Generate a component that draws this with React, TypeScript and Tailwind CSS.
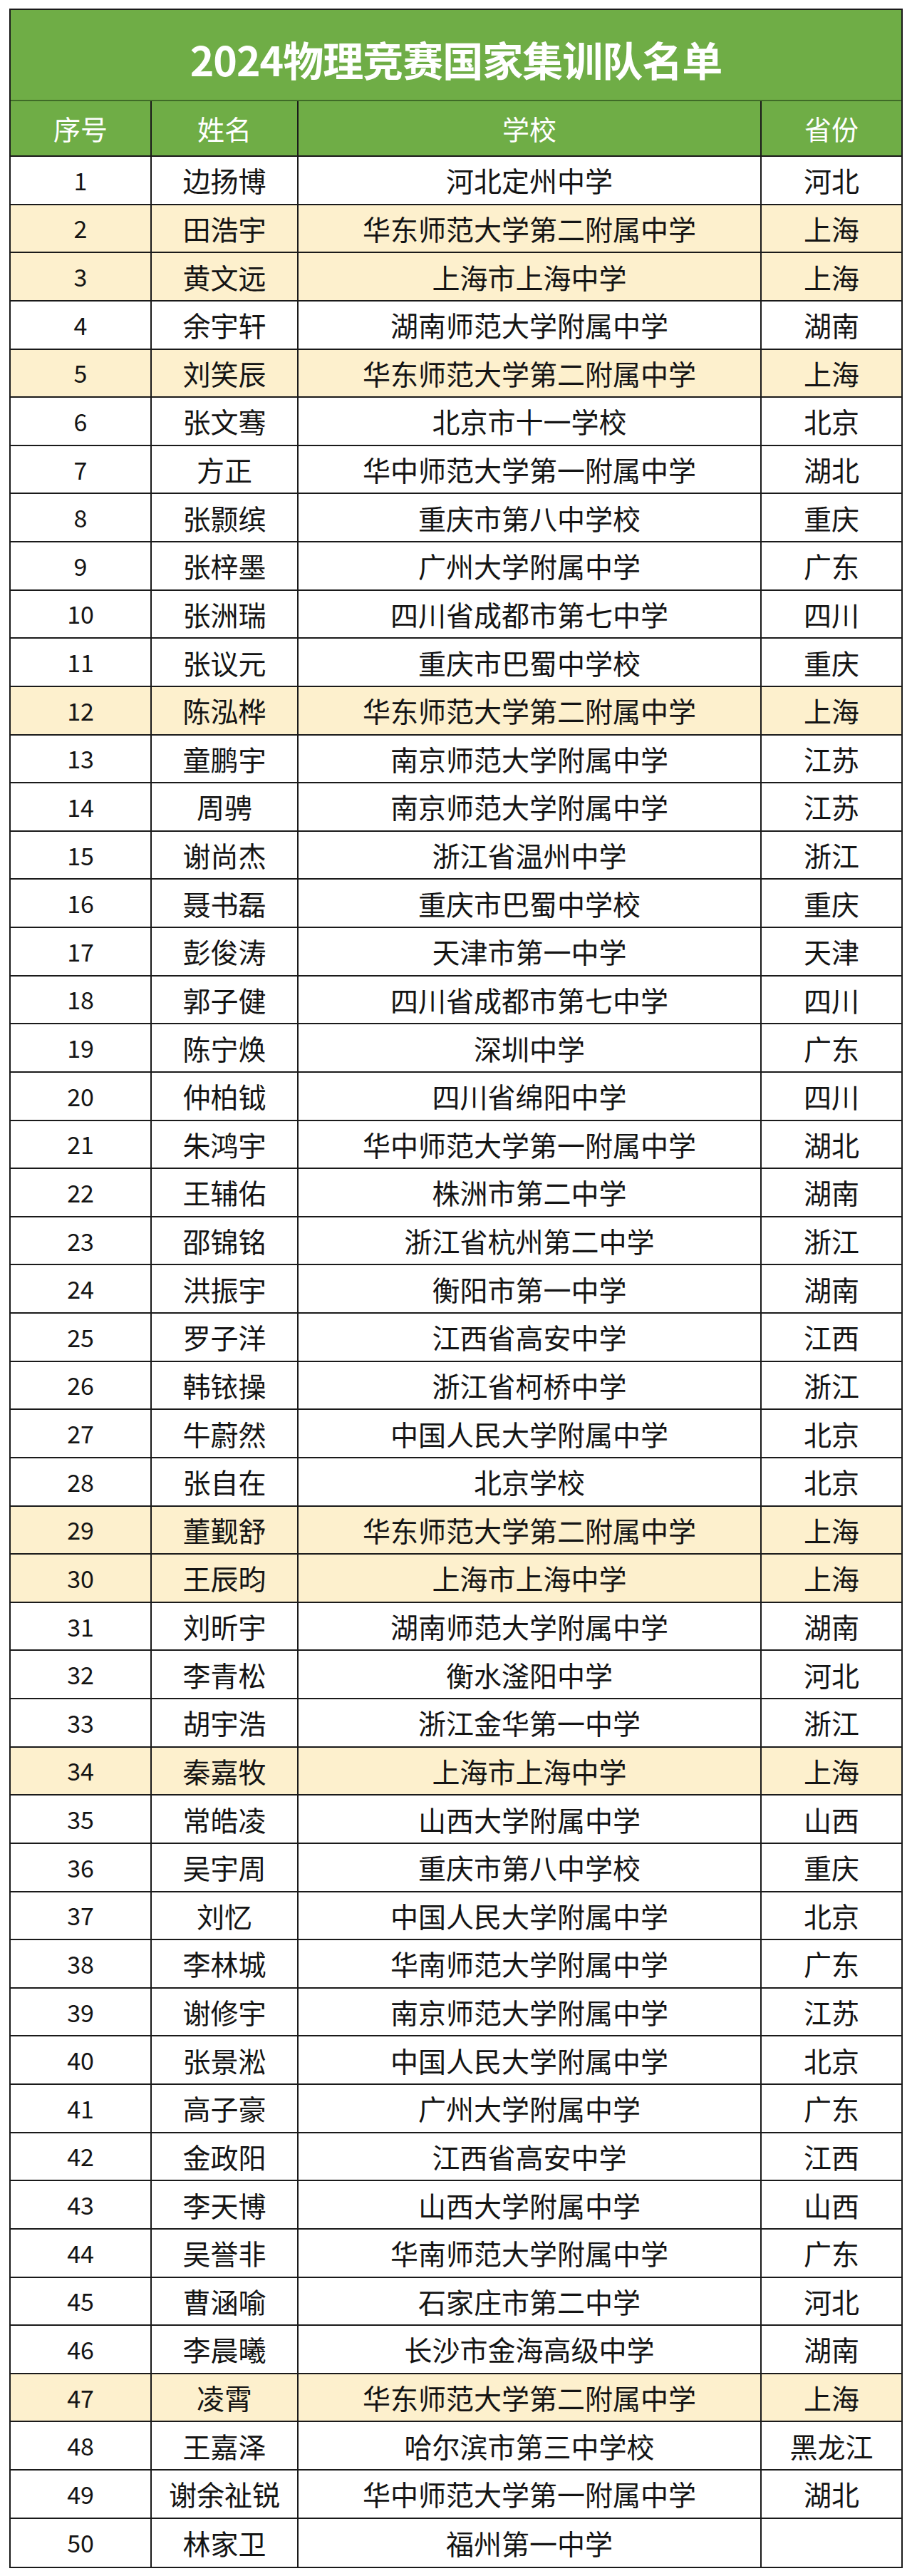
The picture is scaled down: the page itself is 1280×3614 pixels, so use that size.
const rows: [string, string, string][] = [
  ["边扬博", "河北定州中学", "河北"],
  ["田浩宇", "华东师范大学第二附属中学", "上海"],
  ["黄文远", "上海市上海中学", "上海"],
  ["余宇轩", "湖南师范大学附属中学", "湖南"],
  ["刘笑辰", "华东师范大学第二附属中学", "上海"],
  ["张文骞", "北京市十一学校", "北京"],
  ["方正", "华中师范大学第一附属中学", "湖北"],
  ["张颢缤", "重庆市第八中学校", "重庆"],
  ["张梓墨", "广州大学附属中学", "广东"],
  ["张洲瑞", "四川省成都市第七中学", "四川"],
  ["张议元", "重庆市巴蜀中学校", "重庆"],
  ["陈泓桦", "华东师范大学第二附属中学", "上海"],
  ["童鹏宇", "南京师范大学附属中学", "江苏"],
  ["周骋", "南京师范大学附属中学", "江苏"],
  ["谢尚杰", "浙江省温州中学", "浙江"],
  ["聂书磊", "重庆市巴蜀中学校", "重庆"],
  ["彭俊涛", "天津市第一中学", "天津"],
  ["郭子健", "四川省成都市第七中学", "四川"],
  ["陈宁焕", "深圳中学", "广东"],
  ["仲柏钺", "四川省绵阳中学", "四川"],
  ["朱鸿宇", "华中师范大学第一附属中学", "湖北"],
  ["王辅佑", "株洲市第二中学", "湖南"],
  ["邵锦铭", "浙江省杭州第二中学", "浙江"],
  ["洪振宇", "衡阳市第一中学", "湖南"],
  ["罗子洋", "江西省高安中学", "江西"],
  ["韩铱操", "浙江省柯桥中学", "浙江"],
  ["牛蔚然", "中国人民大学附属中学", "北京"],
  ["张自在", "北京学校", "北京"],
  ["董觐舒", "华东师范大学第二附属中学", "上海"],
  ["王辰昀", "上海市上海中学", "上海"],
  ["刘昕宇", "湖南师范大学附属中学", "湖南"],
  ["李青松", "衡水滏阳中学", "河北"],
  ["胡宇浩", "浙江金华第一中学", "浙江"],
  ["秦嘉牧", "上海市上海中学", "上海"],
  ["常皓凌", "山西大学附属中学", "山西"],
  ["吴宇周", "重庆市第八中学校", "重庆"],
  ["刘忆", "中国人民大学附属中学", "北京"],
  ["李林城", "华南师范大学附属中学", "广东"],
  ["谢修宇", "南京师范大学附属中学", "江苏"],
  ["张景淞", "中国人民大学附属中学", "北京"],
  ["高子豪", "广州大学附属中学", "广东"],
  ["金政阳", "江西省高安中学", "江西"],
  ["李天博", "山西大学附属中学", "山西"],
  ["吴誉非", "华南师范大学附属中学", "广东"],
  ["曹涵喻", "石家庄市第二中学", "河北"],
  ["李晨曦", "长沙市金海高级中学", "湖南"],
  ["凌霄", "华东师范大学第二附属中学", "上海"],
  ["王嘉泽", "哈尔滨市第三中学校", "黑龙江"],
  ["谢余祉锐", "华中师范大学第一附属中学", "湖北"],
  ["林家卫", "福州第一中学", ""],
];

const cols = "grid grid-cols-[198px_206px_650px_1fr]";

export default function App() {
  return (
    <div className="min-h-[3614px] bg-white px-[13px] pt-[12px] font-['Noto_Sans_CJK_SC','Noto_Sans',sans-serif] text-[#141414]">
      <div className="border-2 border-[#1a1a1a]">
        {/* title */}
        <div className="flex h-[128px] items-center justify-center border-b-2 border-[#3f6b27] bg-[#6fad46] pt-[10px]">
          <h1 className="text-[57px] font-bold leading-none tracking-[-1px] text-white">
            2024物理竞赛国家集训队名单
          </h1>
        </div>

        {/* header */}
        <div className={`${cols} h-[78px] border-b-2 border-[#1a1a1a] bg-[#6fad46] text-[38px] leading-none text-white`}>
          <div className="flex items-center justify-center border-r-2 border-[#1a1a1a]">序号</div>
          <div className="flex items-center justify-center border-r-2 border-[#1a1a1a]">姓名</div>
          <div className="flex items-center justify-center border-r-2 border-[#1a1a1a]">学校</div>
          <div className="flex items-center justify-center">省份</div>
        </div>

        {rows.map(([name, school, prov], i) => {
          const hl = prov === "上海";
          const last = i === rows.length - 1;
          return (
            <div
              key={i}
              className={`${cols} h-[67.64px] text-[39px] leading-none ${
                last ? "" : "border-b-2 border-[#1a1a1a]"
              } ${hl ? "bg-[#fdf0cd]" : "bg-white"}`}
            >
              <div className="flex items-center justify-center border-r-2 border-[#1a1a1a] text-[34px]">
                {i + 1}
              </div>
              <div className="flex items-center justify-center border-r-2 border-[#1a1a1a]">
                {name}
              </div>
              <div className="flex items-center justify-center border-r-2 border-[#1a1a1a]">
                {school}
              </div>
              <div className="flex items-center justify-center">{prov}</div>
            </div>
          );
        })}
      </div>
    </div>
  );
}
